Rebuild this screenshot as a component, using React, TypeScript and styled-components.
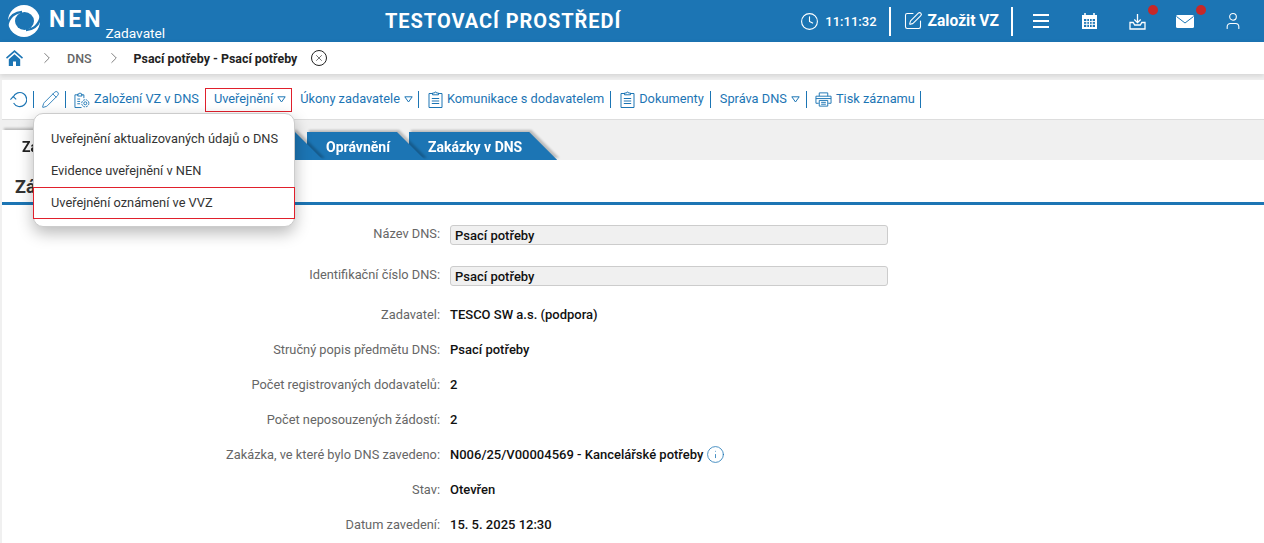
import React from "react";
import styled, { createGlobalStyle } from "styled-components";
import { Clock, SquarePen, Pencil, User, ChevronRight, X, Info } from "lucide-react";

const blue = "#1c75b4";

const GlobalStyle = createGlobalStyle`
  html, body {
    margin: 0;
    height: 100%;
    overflow: hidden;
    background: #f0f0f0;
    font-family: Roboto, "Liberation Sans", sans-serif;
  }
`;

const formRows = [
  { label: "Zadavatel:", value: "TESCO SW a.s. (podpora)" },
  { label: "Stručný popis předmětu DNS:", value: "Psací potřeby" },
  { label: "Počet registrovaných dodavatelů:", value: "2" },
  { label: "Počet neposouzených žádostí:", value: "2" },
  { label: "Zakázka, ve které bylo DNS zavedeno:", value: "N006/25/V00004569 - Kancelářské potřeby", info: true },
  { label: "Stav:", value: "Otevřen" },
  { label: "Datum zavedení:", value: "15. 5. 2025 12:30" },
];

const Logo = () => (
  <svg width="34" height="34" viewBox="0 0 34 34">
    <circle cx="17" cy="17" r="16" fill="#fff" />
    <ellipse cx="17.5" cy="17" rx="9.5" ry="9" fill={blue} />
    <path d="M0 22 C2 13 7 8.5 15 8" fill="none" stroke={blue} strokeWidth="2.4" />
    <path d="M34 12 C32 21 27 25.5 19 26" fill="none" stroke={blue} strokeWidth="2.4" />
  </svg>
);

const CalendarIcon = () => (
  <svg width="17" height="18" viewBox="0 0 17 18">
    <path d="M1 3h15v14H1z" fill="#fff" />
    <path d="M4 1v3M13 1v3" stroke="#fff" strokeWidth="1.6" />
    <path d="M3 7h11v8H3z" fill={blue} />
    <path d="M3 9.6h11M3 12.3h11M5.8 7v8M8.5 7v8M11.2 7v8" stroke="#fff" strokeWidth="1" />
  </svg>
);

const InboxIcon = () => (
  <svg width="17" height="17" viewBox="0 0 17 17" fill="none" stroke="#fff" strokeWidth="1.3">
    <path d="M8.5 1v8.5M5.3 6.5l3.2 3.2 3.2-3.2" />
    <path d="M1 9.5h3.2l1.5 2.5h5.6l1.5-2.5H16v6.5H1z" />
  </svg>
);

const MailIcon = () => (
  <svg width="18" height="13" viewBox="0 0 18 13">
    <rect width="18" height="13" rx="1.5" fill="#fff" />
    <path d="M.5 1.5L9 8l8.5-6.5" fill="none" stroke={blue} strokeWidth="1" />
  </svg>
);

const MenuIcon = () => (
  <svg width="16" height="14" viewBox="0 0 16 14" fill="#fff">
    <rect width="16" height="2" y="0" />
    <rect width="16" height="2" y="6" />
    <rect width="16" height="2" y="12" />
  </svg>
);

const HomeIcon = () => (
  <svg width="17" height="16" viewBox="0 0 17 16" fill={blue}>
    <path d="M8.5 0L0 7.6l1 1.2 7.5-6.6L16 8.8l1-1.2z" />
    <path d="M2.8 9.2L8.5 4.2l5.7 5V16H10v-4.5H7V16H2.8z" />
  </svg>
);

const UndoIcon = () => (
  <svg width="17" height="17" viewBox="0 0 17 17" fill="none" stroke={blue} strokeWidth="1.1">
    <path d="M3.2 6A7 7 0 1 1 3.6 12" />
    <path d="M.4 8.6L3.2 5.6 6.2 8.4" />
  </svg>
);

const ClipboardIcon = () => (
  <svg width="15" height="17" viewBox="0 0 15 17" fill="none" stroke={blue} strokeWidth="1">
    <path d="M4.5 2.5H1v14h13v-14h-3.5" />
    <path d="M4.5 3.8V2h2a1 1 0 0 1 2 0h2v1.8z" />
    <path d="M3.8 7.5h7.4M3.8 10h7.4M3.8 12.5h7.4" />
  </svg>
);

const CaseGearIcon = () => (
  <svg width="16" height="18" viewBox="0 0 17 18" fill="none" stroke={blue} strokeWidth="1">
    <path d="M4.5 3.5H1v13.5h7" />
    <path d="M10.5 7V3.5H7.5" />
    <path d="M4 4.8V2.6h1.4a1 1 0 0 1 2 0h1v2.2z" />
    <path d="M3.5 8h3M3.5 10.5h3M3.5 13h3" />
    <circle cx="12" cy="12.5" r="1.6" />
    <circle cx="12" cy="12.5" r="3.8" strokeDasharray="2 1" />
  </svg>
);

const PrinterIcon = () => (
  <svg width="17" height="17" viewBox="0 0 18 17" fill="none" stroke={blue} strokeWidth="1">
    <path d="M4.5 5V1.5h9V5" />
    <path d="M4 12.5H1V5h16v7.5h-3" />
    <path d="M4.5 9.5h9v6h-9z" />
    <path d="M1 7.5h16M6.5 11.5h5M6.5 13.5h5" />
  </svg>
);

const Caret = () => (
  <svg width="9" height="7" viewBox="0 0 9 7" fill="none" stroke={blue} strokeWidth="1">
    <path d="M.8.8h7.4L4.5 6z" />
  </svg>
);

export default function App() {
  return (
    <Page>
      <GlobalStyle />
      <Header>
        <LogoBlock>
          <Logo />
          <LogoName>NEN</LogoName>
          <LogoRole>Zadavatel</LogoRole>
        </LogoBlock>
        <EnvTitle>TESTOVACÍ PROSTŘEDÍ</EnvTitle>
        <HeaderRight>
          <Clock size={19} strokeWidth={1.4} color="#fff" />
          <Time>11:11:32</Time>
          <HeaderDivider />
          <CreateLink>
            <SquarePen size={20} strokeWidth={1.3} color="#fff" />
            Založit VZ
          </CreateLink>
          <HeaderDivider />
          <HeaderIcons>
            <HeaderIcon><MenuIcon /></HeaderIcon>
            <HeaderIcon><CalendarIcon /></HeaderIcon>
            <HeaderIcon><InboxIcon /><Dot /></HeaderIcon>
            <HeaderIcon><MailIcon /><Dot /></HeaderIcon>
            <HeaderIcon><User size={20} strokeWidth={1.3} color="#fff" /></HeaderIcon>
          </HeaderIcons>
        </HeaderRight>
      </Header>

      <Breadcrumb>
        <HomeLink><HomeIcon /></HomeLink>
        <CrumbArrow><ChevronRight size={18} strokeWidth={1} color="#555" /></CrumbArrow>
        <Crumb>DNS</Crumb>
        <CrumbArrow><ChevronRight size={18} strokeWidth={1} color="#555" /></CrumbArrow>
        <Crumb $current>Psací potřeby - Psací potřeby</Crumb>
        <CloseCrumb><X size={10} strokeWidth={1.5} color="#222" /></CloseCrumb>
      </Breadcrumb>

      <Main>
        <Toolbar>
          <ToolIcon><UndoIcon /></ToolIcon>
          <ToolDivider />
          <ToolIcon><Pencil size={19} strokeWidth={1.1} color={blue} /></ToolIcon>
          <ToolDivider />
          <ToolButton><CaseGearIcon />Založení VZ v DNS</ToolButton>
          <ToolButton $open>Uveřejnění <Caret /></ToolButton>
          <ToolButton $tight>Úkony zadavatele <Caret /></ToolButton>
          <ToolDivider />
          <ToolButton $inset><ClipboardIcon />Komunikace s dodavatelem</ToolButton>
          <ToolDivider />
          <ToolButton $inset><ClipboardIcon />Dokumenty</ToolButton>
          <ToolDivider />
          <ToolButton $inset>Správa DNS <Caret /></ToolButton>
          <ToolDivider />
          <ToolButton $tight><PrinterIcon />Tisk záznamu</ToolButton>
          <ToolDivider />
        </Toolbar>

        <Dropdown>
          <DropdownItem>Uveřejnění aktualizovaných údajů o DNS</DropdownItem>
          <DropdownItem>Evidence uveřejnění v NEN</DropdownItem>
          <DropdownItem $selected>Uveřejnění oznámení ve VVZ</DropdownItem>
        </Dropdown>

        <Tabs>
          <TabShadow $order={4}><Tab $active $width={170}>Základní údaje</Tab></TabShadow>
          <TabShadow $order={3}><Tab $width={167} /></TabShadow>
          <TabShadow $order={2}><Tab>Oprávnění</Tab></TabShadow>
          <TabShadow $order={1}><Tab>Zakázky v DNS</Tab></TabShadow>
        </Tabs>

        <Panel>
          <PanelTitle>Základní údaje</PanelTitle>
          <Form>
            <FormLabel>Název DNS:</FormLabel>
            <ReadonlyField>Psací potřeby</ReadonlyField>
            <FormLabel $last>Identifikační číslo DNS:</FormLabel>
            <ReadonlyField $last>Psací potřeby</ReadonlyField>
            {formRows.map((row) => (
              <React.Fragment key={row.label}>
                <FormLabel $text>{row.label}</FormLabel>
                <FormValue>
                  {row.value}
                  {row.info && <Info size={19} strokeWidth={1} color={blue} />}
                </FormValue>
              </React.Fragment>
            ))}
          </Form>
        </Panel>
      </Main>
    </Page>
  );
}

const Page = styled.div`
  height: 543px;
  overflow: hidden;
  display: flex;
  flex-direction: column;
`;

const Header = styled.header`
  height: 42px;
  flex: none;
  display: flex;
  align-items: center;
  background: ${blue};
  color: #fff;
`;

const LogoBlock = styled.div`
  width: 385px;
  height: 42px;
  flex: none;
  display: flex;
  align-items: center;
  padding-left: 7px;
  box-sizing: border-box;
`;

const LogoName = styled.span`
  font-size: 23px;
  font-weight: 700;
  letter-spacing: 3px;
  margin: -3px 0 0 8px;
`;

const LogoRole = styled.span`
  font-size: 13.7px;
  align-self: flex-end;
  margin: 0 0 1px 2px;
`;

const EnvTitle = styled.div`
  font-size: 20px;
  font-weight: 700;
  letter-spacing: 0.95px;
  white-space: nowrap;
`;

const HeaderRight = styled.div`
  margin-left: auto;
  display: flex;
  align-items: center;
  padding-right: 7px;
`;

const Time = styled.span`
  font-size: 13px;
  font-weight: 500;
  margin: 0 12px 0 6px;
`;

const HeaderDivider = styled.span`
  width: 2px;
  height: 29px;
  background: #fff;
`;

const CreateLink = styled.span`
  display: flex;
  align-items: center;
  gap: 5px;
  font-size: 15.6px;
  font-weight: 700;
  margin: 0 12px;
`;

const HeaderIcons = styled.div`
  display: flex;
  align-items: center;
  margin-left: 4px;
`;

const HeaderIcon = styled.span`
  position: relative;
  width: 48px;
  height: 20px;
  display: flex;
  align-items: center;
  justify-content: center;
`;

const Dot = styled.i`
  position: absolute;
  top: -6px;
  right: 3px;
  width: 10px;
  height: 10px;
  border-radius: 50%;
  background: #c62828;
`;

const Breadcrumb = styled.nav`
  position: relative;
  height: 32px;
  flex: none;
  display: flex;
  align-items: center;
  padding-left: 6px;
  background: #fff;
  box-shadow: 0 2px 5px rgba(0, 0, 0, 0.12);
`;

const HomeLink = styled.span`
  display: flex;
  margin-right: 15px;
`;

const CrumbArrow = styled.span`
  display: flex;
  margin-right: 11px;
`;

const Crumb = styled.span<{ $current?: boolean }>`
  font-size: ${(p) => (p.$current ? "12.4px" : "12.5px")};
  font-weight: ${(p) => (p.$current ? 700 : 500)};
  color: ${(p) => (p.$current ? "#222" : "#666")};
  margin-right: ${(p) => (p.$current ? "14px" : "13px")};
`;

const CloseCrumb = styled.span`
  width: 16px;
  height: 16px;
  box-sizing: border-box;
  border: 1px solid #222;
  border-radius: 50%;
  display: flex;
  align-items: center;
  justify-content: center;
`;

const Main = styled.main`
  position: relative;
  flex: 1;
  min-height: 0;
  padding: 6px 0 0 2px;
`;

const Toolbar = styled.div`
  height: 39px;
  display: flex;
  align-items: center;
  padding-left: 8px;
  background: #fff;
  border-bottom: 1px solid #ddd;
`;

const ToolIcon = styled.span`
  display: flex;
  justify-content: center;
  width: 17px;
  margin-right: 6px;
  svg { flex: none; }
`;

const ToolDivider = styled.span`
  width: 1px;
  height: 17px;
  background: ${blue};
  margin-right: 8px;
`;

const ToolButton = styled.span<{ $open?: boolean; $inset?: boolean; $tight?: boolean }>`
  display: flex;
  align-items: center;
  gap: 4px;
  height: 24px;
  box-sizing: border-box;
  padding-bottom: 2px;
  padding-right: ${(p) => (p.$open ? "5px" : p.$tight ? "5px" : "6px")};
  padding-left: ${(p) => (p.$open ? "8px" : p.$inset ? "1px" : "0")};
  margin-right: ${(p) => (p.$open ? "8px" : "0")};
  border: ${(p) => (p.$open ? "1px solid #e0202c" : "none")};
  font-size: 12.8px;
  color: ${blue};
  white-space: nowrap;
  svg { margin-top: 2px; }
`;

const Dropdown = styled.div`
  position: absolute;
  z-index: 10;
  left: 33px;
  top: 39px;
  width: 262px;
  box-sizing: border-box;
  padding: 9px 0 7px;
  background: #fff;
  border: 1px solid #ccc;
  border-radius: 10px;
  box-shadow: 0 6px 16px rgba(0, 0, 0, 0.28);
`;

const DropdownItem = styled.div<{ $selected?: boolean }>`
  height: 32px;
  line-height: 32px;
  padding-left: 17px;
  font-size: 12.8px;
  color: #333;
  white-space: nowrap;
  ${(p) =>
    p.$selected &&
    `
    margin: 0 -1px;
    box-sizing: border-box;
    border: 1px solid #e0202c;
    line-height: 30px;
  `}
`;

const Tabs = styled.div`
  height: 40px;
  display: flex;
  align-items: flex-end;
`;

const TabShadow = styled.div<{ $order: number }>`
  position: relative;
  z-index: ${(p) => p.$order};
  margin-right: -16px;
  filter: drop-shadow(2px -2px 1px rgba(0, 0, 0, 0.22));
`;

const Tab = styled.div<{ $active?: boolean; $width?: number }>`
  height: ${(p) => (p.$active ? "30px" : "28px")};
  line-height: ${(p) => (p.$active ? "34px" : "30px")};
  box-sizing: border-box;
  ${(p) => p.$width && `width: ${p.$width}px;`}
  padding: 0 35px 0 ${(p) => (p.$active ? "20px" : "19px")};
  font-size: 14px;
  font-weight: 700;
  white-space: nowrap;
  color: ${(p) => (p.$active ? "#222" : "#fff")};
  background: ${(p) => (p.$active ? "#fff" : blue)};
  clip-path: polygon(0 0, calc(100% - 28px) 0, 100% 100%, 0 100%);
`;

const Panel = styled.section`
  background: #fff;
  height: 400px;
`;

const PanelTitle = styled.h2`
  margin: 0;
  height: 45px;
  box-sizing: border-box;
  padding: 16px 0 0 13px;
  font-size: 18px;
  line-height: 21px;
  font-weight: 700;
  color: #333;
  border-bottom: 3px solid ${blue};
`;

const Form = styled.div`
  display: grid;
  grid-template-columns: 438px 438px;
  column-gap: 10px;
  padding-top: 20px;
`;

const FormLabel = styled.div<{ $text?: boolean; $last?: boolean }>`
  height: ${(p) => (p.$text ? "35px" : p.$last ? "31px" : "41px")};
  line-height: ${(p) => (p.$text ? "35px" : "18px")};
  text-align: right;
  font-size: 12.8px;
  color: #666;
  white-space: nowrap;
`;

const ReadonlyField = styled.div<{ $last?: boolean }>`
  height: 20px;
  margin-bottom: ${(p) => (p.$last ? "11px" : "21px")};
  box-sizing: border-box;
  padding-left: 4px;
  line-height: 20px;
  font-size: 13px;
  font-weight: 500;
  color: #111;
  background: #f0f0f0;
  border: 1px solid #ccc;
  border-radius: 3px;
`;

const FormValue = styled.div`
  height: 35px;
  display: flex;
  align-items: center;
  gap: 3px;
  font-size: 13px;
  font-weight: 500;
  color: #111;
  white-space: nowrap;
`;
